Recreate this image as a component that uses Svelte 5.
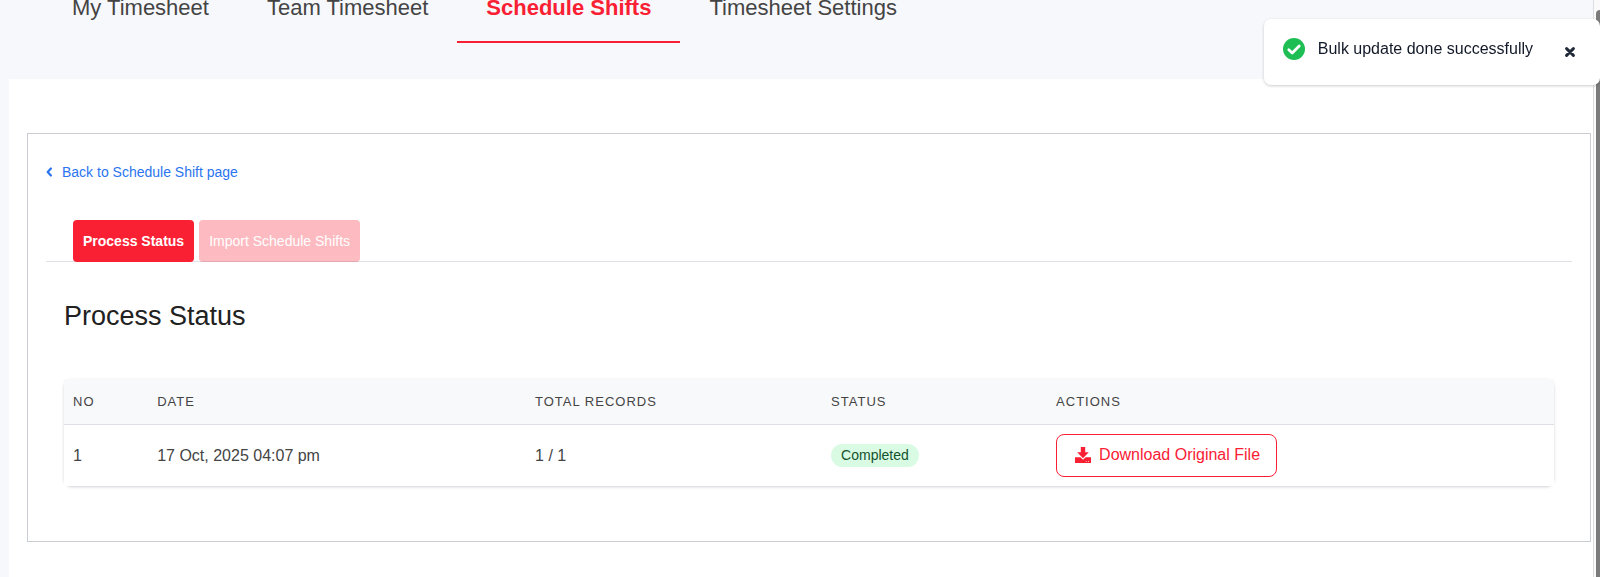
<script>
  const sections = ['My Timesheet', 'Team Timesheet', 'Schedule Shifts', 'Timesheet Settings'];
  const activeSection = 'Schedule Shifts';
  const steps = ['Process Status', 'Import Schedule Shifts'];
  let activeStep = $state('Process Status');
  let toastOpen = $state(true);
  const rows = [{ no: 1, date: '17 Oct, 2025 04:07 pm', total: '1 / 1', status: 'Completed' }];
</script>

<div class="shell">
  <div class="page">
    <nav class="sections">
      {#each sections as section}
        <a href="#top" class:active={section === activeSection}>{section}</a>
      {/each}
    </nav>

    <main>
      <section class="panel">
        <a class="back" href="#back">
          <svg viewBox="0 0 6 10" width="6" height="10" aria-hidden="true">
            <path d="M4.9 1.5 1.7 5l3.2 3.5" fill="none" stroke="currentColor" stroke-width="2.2" stroke-linecap="round" stroke-linejoin="round" />
          </svg>
          <span>Back to Schedule Shift page</span>
        </a>

        <div class="steps">
          {#each steps as step}
            <button type="button" class:current={step === activeStep} onclick={() => (activeStep = step)}>{step}</button>
          {/each}
        </div>

        <h1>Process Status</h1>

        <table>
          <colgroup>
            <col class="c-no" /><col class="c-date" /><col class="c-total" /><col class="c-status" /><col />
          </colgroup>
          <thead>
            <tr>
              <th scope="col">NO</th>
              <th scope="col">DATE</th>
              <th scope="col">TOTAL RECORDS</th>
              <th scope="col">STATUS</th>
              <th scope="col">ACTIONS</th>
            </tr>
          </thead>
          <tbody>
            {#each rows as row}
              <tr>
                <td>{row.no}</td>
                <td>{row.date}</td>
                <td>{row.total}</td>
                <td><span class="badge">{row.status}</span></td>
                <td>
                  <button type="button" class="download">
                    <svg viewBox="0 0 16 16" width="16" height="16" aria-hidden="true">
                      <path fill="currentColor" d="M5.8 0h4.4v5.3h3.6L8 11.2 2.2 5.3h3.6z" />
                      <path fill="currentColor" fill-rule="evenodd" d="M0 10.2h5.4L8 12.7l2.6-2.5H16V16H0zM10.8 14v.8h.9V14zm2.2 0v.8h.9V14z" />
                    </svg>
                    <span>Download Original File</span>
                  </button>
                </td>
              </tr>
            {/each}
          </tbody>
        </table>
      </section>
    </main>
  </div>
  <div class="rail"><div class="thumb"></div></div>
</div>

{#if toastOpen}
  <div class="toast" role="status">
    <svg viewBox="0 0 22 22" width="22" height="22" aria-hidden="true">
      <circle cx="11" cy="11" r="11" fill="#1fbe55" />
      <path d="M5.8 11.7 9.2 15l7-7" fill="none" stroke="#fff" stroke-width="2.8" stroke-linecap="round" stroke-linejoin="round" />
    </svg>
    <p>Bulk update done successfully</p>
    <button type="button" aria-label="Close" onclick={() => (toastOpen = false)}>
      <svg viewBox="0 0 10 10" width="10" height="10" aria-hidden="true">
        <path d="M1.6 1.6l6.8 6.8M8.4 1.6 1.6 8.4" stroke="currentColor" stroke-width="2.9" stroke-linecap="round" />
      </svg>
    </button>
  </div>
{/if}

<style>
  .shell {
    display: flex;
    min-height: 100vh;
    background: #f7f8fc;
    color: #444;
    font-family: 'Liberation Sans', Arial, Helvetica, sans-serif;
    font-size: 16px;
    line-height: 20px;
  }
  .page {
    flex: 1;
    min-width: 0;
    display: flex;
    flex-direction: column;
  }
  .sections {
    display: flex;
    padding: 0 43px 36px;
    font-size: 22px;
    line-height: 15px;
  }
  .sections a {
    padding: 0 29px 26px;
    border-bottom: 2px solid transparent;
    color: #444;
    text-decoration: none;
  }
  .sections a.active {
    border-color: #fa2034;
    color: #fa2034;
    font-weight: 700;
  }
  main {
    flex: 1;
    margin-left: 9px;
    padding: 54px 2px 35px 18px;
    background: #fff;
  }
  .panel {
    padding: 28px 18px 55px;
    border: 1px solid #c9ccd3;
  }
  .back {
    display: inline-flex;
    align-items: center;
    gap: 10px;
    color: #2b74f0;
    font-size: 14px;
    text-decoration: none;
    vertical-align: top;
  }
  button {
    font-family: inherit;
    cursor: pointer;
  }
  .steps {
    display: flex;
    gap: 5px;
    margin-top: 38px;
    padding-left: 27px;
    border-bottom: 1px solid #dee2e6;
  }
  .steps button {
    margin-bottom: -1px;
    padding: 11px 10px;
    border: 0;
    border-radius: 4px;
    background: #fa2034;
    color: #fff;
    font-size: 14px;
    line-height: 20px;
    opacity: 0.3;
  }
  .steps button.current {
    font-weight: 700;
    opacity: 1;
  }
  h1 {
    margin: 38px 18px 47px;
    color: #212121;
    font-size: 27px;
    font-weight: 400;
    line-height: 32px;
  }
  table {
    width: calc(100% - 36px);
    margin: 0 18px;
    border-spacing: 0;
    table-layout: fixed;
    border-radius: 8px;
    box-shadow: 0 1px 3px rgba(40, 40, 70, 0.22);
  }
  .c-no { width: 5.65%; }
  .c-date { width: 25.36%; }
  .c-total { width: 19.87%; }
  .c-status { width: 15.1%; }
  th {
    padding: 13px 9px 12px;
    border-bottom: 1px solid #dedfe6;
    background: #f8f9fb;
    font-size: 13px;
    font-weight: 400;
    letter-spacing: 1px;
    text-align: left;
  }
  td {
    padding: 9px;
    background: #fff;
  }
  .badge {
    display: inline-block;
    padding: 2px 10px;
    border-radius: 12px;
    background: #d9fbe4;
    color: #14532d;
    font-size: 14px;
    line-height: 19px;
  }
  .download {
    display: flex;
    align-items: center;
    gap: 8px;
    padding: 10px 16px 11px 18px;
    border: 1px solid #fa2034;
    border-radius: 8px;
    background: #fff;
    color: #fa2034;
    font-size: 16px;
    line-height: 20px;
  }
  .rail {
    display: flex;
    width: 6px;
    padding-top: 10px;
    border-left: 1px solid #dcdde0;
    background: #fafafa;
  }
  .thumb {
    flex: 1;
    margin-left: 2px;
    border-radius: 4px 0 0 0;
    background: #7b7b7b;
  }
  .toast {
    position: fixed;
    top: 19px;
    right: 0;
    display: flex;
    align-items: flex-start;
    padding: 19px 25px 25px 19px;
    border-radius: 7px;
    background: #fff;
    box-shadow: 0 1px 3px rgba(0, 0, 0, 0.2);
    color: #111827;
    font-family: 'Liberation Sans', Arial, Helvetica, sans-serif;
  }
  .toast p {
    margin: 0 32px 0 13px;
    font-size: 16px;
    line-height: 22px;
  }
  .toast button {
    display: flex;
    margin-top: 9px;
    padding: 0;
    border: 0;
    background: none;
    color: #1f2937;
  }
</style>
